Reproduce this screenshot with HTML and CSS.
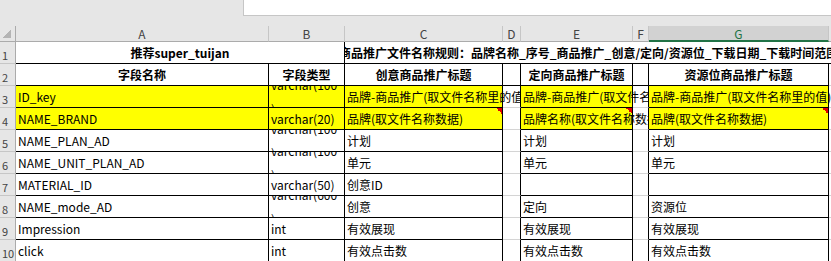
FILE: index.html
```html
<!DOCTYPE html>
<html lang="zh-CN">
<head>
    <meta charset="UTF-8">
    <title>super_tuijan</title>
    <link rel="stylesheet" href="styles.css">
</head>
<body>
    <div class="topbar"><div class="formula"></div></div>
    <div class="sheet">
        <div class="corner"></div>
        <div class="col">A</div>
        <div class="col">B</div>
        <div class="col">C</div>
        <div class="col">D</div>
        <div class="col">E</div>
        <div class="col">F</div>
        <div class="col sel">G</div>
        <div class="col last"></div>

        <div class="rh">1</div>
        <div class="c title span-ab">推荐super_tuijan</div>
        <div class="c title rule span-rest"><span>商品推广文件名称规则：品牌名称_序号_商品推广_创意/定向/资源位_下载日期_下载时间范围</span></div>

        <div class="rh">2</div>
        <div class="c k hd">字段名称</div>
        <div class="c k hd">字段类型</div>
        <div class="c k hd">创意商品推广标题</div>
        <div class="c k hd"></div>
        <div class="c k hd">定向商品推广标题</div>
        <div class="c k hd"></div>
        <div class="c k hd">资源位商品推广标题</div>
        <div class="c"></div>

        <div class="rh">3</div>
        <div class="c k y">ID_key</div>
        <div class="c k y wrap"><span>varchar(100</span><span>)</span></div>
        <div class="c k y">品牌-商品推广(取文件名称里的值)</div>
        <div class="c kr"></div>
        <div class="c k y">品牌-商品推广(取文件名称里的值)</div>
        <div class="c kr"></div>
        <div class="c k y">品牌-商品推广(取文件名称里的值)</div>
        <div class="c"></div>

        <div class="rh">4</div>
        <div class="c k y">NAME_BRAND</div>
        <div class="c k y">varchar(20)</div>
        <div class="c k y note">品牌(取文件名称数据)</div>
        <div class="c kr"></div>
        <div class="c k y note">品牌名称(取文件名称数据)</div>
        <div class="c kr"></div>
        <div class="c k y note">品牌(取文件名称数据)</div>
        <div class="c"></div>

        <div class="rh">5</div>
        <div class="c k">NAME_PLAN_AD</div>
        <div class="c k wrap"><span>varchar(100</span><span>)</span></div>
        <div class="c k">计划</div>
        <div class="c kr"></div>
        <div class="c k">计划</div>
        <div class="c kr"></div>
        <div class="c k">计划</div>
        <div class="c"></div>

        <div class="rh">6</div>
        <div class="c k">NAME_UNIT_PLAN_AD</div>
        <div class="c k wrap"><span>varchar(100</span><span>)</span></div>
        <div class="c k">单元</div>
        <div class="c kr"></div>
        <div class="c k">单元</div>
        <div class="c kr"></div>
        <div class="c k">单元</div>
        <div class="c"></div>

        <div class="rh">7</div>
        <div class="c k">MATERIAL_ID</div>
        <div class="c k">varchar(50)</div>
        <div class="c k">创意ID</div>
        <div class="c kr"></div>
        <div class="c k"></div>
        <div class="c kr"></div>
        <div class="c k"></div>
        <div class="c"></div>

        <div class="rh">8</div>
        <div class="c k">NAME_mode_AD</div>
        <div class="c k wrap"><span>varchar(600</span><span>)</span></div>
        <div class="c k">创意</div>
        <div class="c kr"></div>
        <div class="c k">定向</div>
        <div class="c kr"></div>
        <div class="c k">资源位</div>
        <div class="c"></div>

        <div class="rh">9</div>
        <div class="c k">Impression</div>
        <div class="c k">int</div>
        <div class="c k">有效展现</div>
        <div class="c kr"></div>
        <div class="c k">有效展现</div>
        <div class="c kr"></div>
        <div class="c k">有效展现</div>
        <div class="c"></div>

        <div class="rh">10</div>
        <div class="c k">click</div>
        <div class="c k">int</div>
        <div class="c k">有效点击数</div>
        <div class="c kr"></div>
        <div class="c k">有效点击数</div>
        <div class="c kr"></div>
        <div class="c k">有效点击数</div>
        <div class="c"></div>
    </div>
</body>
</html>
```

FILE: styles.css
```css
html, body {
    margin: 0;
    overflow: hidden;
}
body {
    background: #fff;
    font-family: "Noto Sans CJK SC", "Noto Sans", sans-serif;
    font-size: 12px;
    color: #000;
}
.topbar {
    height: 26px;
    background: #e6e6e6;
    padding-left: 243px;
}
.formula {
    height: 15px;
    background: #fff;
    border-left: 1px solid #c6c6c6;
    border-bottom: 1px solid #c6c6c6;
}
.sheet {
    display: grid;
    grid-template-columns: 16px 253px 76px 158px 18px 112px 16px 180px 1fr;
    grid-template-rows: 16px repeat(10, 22px);
    background: #fff;
}
.sheet > div {
    box-sizing: border-box;
}
.corner {
    background: #e6e6e6 linear-gradient(to top left, #b4b4b4 50%, transparent 50%) no-repeat 3px 4px / 8px 8px;
    border-right: 1px solid #ababab;
    border-bottom: 1px solid #ababab;
}
.col {
    background: #e6e6e6;
    border-right: 1px solid #c6c6c6;
    border-bottom: 1px solid #ababab;
    color: #444;
    font-size: 12px;
    line-height: 15px;
    text-align: center;
}
.col.sel {
    background: #d2d2d2;
    color: #217346;
    border-bottom: 2px solid #217346;
}
.col.last {
    border-right: none;
}
.rh {
    background: #e6e6e6;
    border-right: 1px solid #ababab;
    border-bottom: 1px solid #c6c6c6;
    color: #444;
    font-size: 11px;
    line-height: 14px;
    padding: 6px 0 0 2px;
}
.c {
    border-right: 1px solid #d4d4d4;
    border-bottom: 1px solid #d4d4d4;
    padding: 0 2px;
    line-height: 21px;
    white-space: nowrap;
}
.k {
    border-right-color: #000;
    border-bottom-color: #000;
}
.kr {
    border-right-color: #000;
}
.y {
    background: #ff0;
}
.note {
    background: linear-gradient(to bottom left, #e00000 50%, transparent 50%) no-repeat top right / 6px 6px, #ff0;
}
.hd {
    font-weight: bold;
    text-align: center;
}
.title {
    font-weight: bold;
    border-bottom-color: #000;
}
.span-ab {
    grid-column: span 2;
    text-align: center;
    border-right-color: #000;
}
.span-rest {
    grid-column: span 6;
    border-right: none;
    overflow: hidden;
    padding: 0;
    text-indent: -6px;
}
.wrap {
    display: flex;
    flex-direction: column;
    justify-content: center;
    overflow: hidden;
    line-height: 24px;
}
```
